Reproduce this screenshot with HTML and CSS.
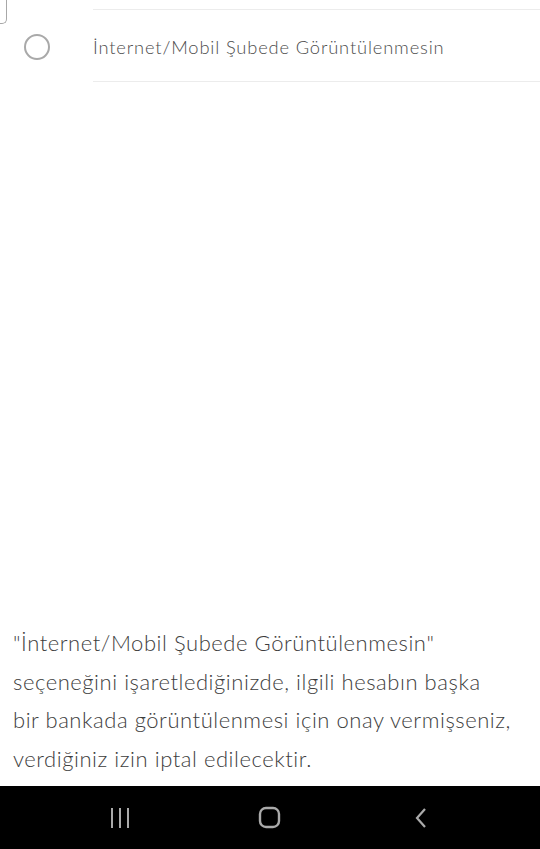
FILE: index.html
```html
<!DOCTYPE html>
<html lang="tr">
<head>
    <meta charset="UTF-8">
    <meta name="viewport" content="width=device-width, initial-scale=1.0">
    <title>Hesap Görünürlüğü</title>
    <link rel="stylesheet" href="styles.css">
</head>
<body>
    <div class="screen">
        <div class="content">
            <!-- Kartın alt kenarı (kaydırılmış) -->
            <div class="prev-card"></div>

            <!-- Seçenek -->
            <label class="option">
                <span class="radio-cell"><span class="radio"></span></span>
                <span class="option-text">İnternet/Mobil Şubede Görüntülenmesin</span>
            </label>

            <p class="info">"İnternet/Mobil Şubede Görüntülenmesin"<br>
                seçeneğini işaretlediğinizde, ilgili hesabın başka<br>
                bir bankada görüntülenmesi için onay vermişseniz,<br>
                verdiğiniz izin iptal edilecektir.</p>
        </div>

        <!-- Android gezinme çubuğu -->
        <nav class="navbar">
            <svg class="nav-icon" width="22" height="22" viewBox="0 0 22 22">
                <rect x="3" y="1" width="2" height="20" fill="#aaa"/>
                <rect x="11" y="1" width="2" height="20" fill="#aaa"/>
                <rect x="19" y="1" width="2" height="20" fill="#aaa"/>
            </svg>
            <svg class="nav-icon" width="24" height="24" viewBox="0 0 24 24">
                <rect x="2" y="2" width="19" height="19" rx="6" fill="none" stroke="#aaa" stroke-width="2.4"/>
            </svg>
            <svg class="nav-icon" width="22" height="24" viewBox="0 0 22 24">
                <polyline points="15,3 7,12 15,21" fill="none" stroke="#aaa" stroke-width="2.2"/>
            </svg>
        </nav>
    </div>
</body>
</html>
```

FILE: styles.css
```css
html, body {
    margin: 0;
    padding: 0;
    background-color: #fff;
}

body {
    font-family: 'Lato', 'Open Sans', sans-serif;
    font-weight: 300;
    color: #4a4a4a;
}

.screen {
    display: flex;
    flex-direction: column;
    height: 849px;
}

.content {
    flex: 1;
    display: flex;
    flex-direction: column;
}

.prev-card {
    width: 7px;
    height: 24px;
    border-right: 1px solid #a8a8a8;
    border-bottom: 1px solid #a8a8a8;
    border-bottom-right-radius: 5px;
    margin-bottom: -15px;
    box-sizing: border-box;
}

.option {
    display: flex;
    align-items: stretch;
}

.radio-cell {
    width: 93px;
    display: flex;
    align-items: center;
    padding-left: 24px;
    padding-top: 2px;
    box-sizing: border-box;
}

.radio {
    width: 26px;
    height: 26px;
    border: 2px solid #a9a9a9;
    border-radius: 50%;
    box-sizing: border-box;
}

.option-text {
    flex: 1;
    height: 73px;
    display: flex;
    align-items: center;
    padding-top: 2px;
    border-top: 1px solid #ececec;
    border-bottom: 1px solid #ececec;
    box-sizing: border-box;
    font-size: 18.3px;
    letter-spacing: 0.85px;
    color: #4d4d4d;
}

.info {
    margin: auto 0 8px 0;
    padding: 0 13px;
    font-size: 22px;
    line-height: 38.5px;
    letter-spacing: 0.55px;
    white-space: nowrap;
    color: #3d3d3d;
}

.navbar {
    height: 63px;
    background-color: #000;
    display: flex;
    justify-content: space-between;
    align-items: center;
    padding: 0 108px 0 108px;
}

.nav-icon {
    display: block;
}
```
